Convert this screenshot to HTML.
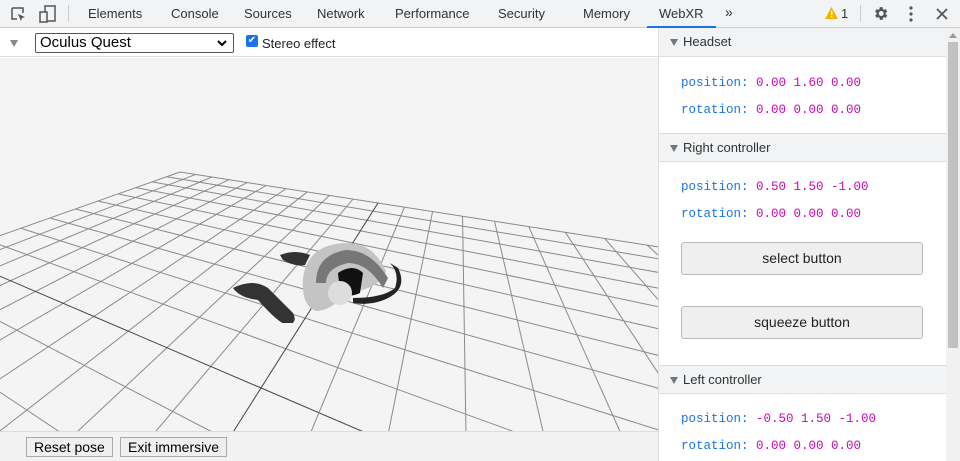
<!DOCTYPE html><html><head><style>
*{box-sizing:border-box;margin:0;padding:0}
body{width:960px;height:461px;overflow:hidden;font-family:"Liberation Sans",sans-serif;background:#fff;position:relative}
.top{position:absolute;left:0;top:0;width:960px;height:28px;background:#f1f3f4;border-bottom:1px solid #cbcdd1}
.tab{position:absolute;top:6px;font-size:13px;color:#333}
.bar2{position:absolute;left:0;top:28px;width:658px;height:29px;background:#fff;border-bottom:1px solid #ddd}
.view{position:absolute;left:0;top:58px;width:658px;height:373px;background:#f4f4f4;overflow:hidden}
.bot{position:absolute;left:0;top:431px;width:658px;height:30px;background:#f2f2f2;border-top:1px solid #ddd}
.btn{position:absolute;top:5px;height:20px;border:1px solid #aaa;background:#efefef;font-size:14px;padding:0 7px;line-height:18px}
.rp{position:absolute;left:658px;top:28px;width:288px;height:433px;border-left:1px solid #ddd;background:#fff;overflow:hidden}
.sh{height:29px;background:#f1f3f4;border-bottom:1px solid #ddd;border-top:1px solid #ddd;font-size:13px;color:#333;line-height:28px;padding-left:24px;position:relative}
.sh:before{content:"";position:absolute;left:11px;top:11px;border-left:4px solid transparent;border-right:4px solid transparent;border-top:7px solid #777}
.kv{font-family:"Liberation Mono",monospace;font-size:12.5px;padding-left:22px;height:27px;line-height:27px}
.k{color:#1a73e8}.v{color:#c80ab0}
.rb{margin:0 23px 0 22px;height:33px;border:1px solid #bbb;border-radius:3px;background:#efefef;font-size:14px;text-align:center;line-height:31px;color:#222}
.sb{position:absolute;left:946px;top:28px;width:14px;height:433px;background:#f1f1f1}
</style></head><body>
<div class="top">
<svg style="position:absolute;left:10px;top:6px" width="16" height="16"><path d="M2 2h11v5M2 2v11h5" fill="none" stroke="#555" stroke-width="1.5"/><path d="M8 8l7 3-3 1-1 3z" fill="#555"/></svg>
<svg style="position:absolute;left:39px;top:5px" width="18" height="18"><rect x="6" y="1" width="10" height="15" fill="none" stroke="#555" stroke-width="1.5"/><rect x="1" y="7" width="7" height="10" fill="#f1f3f4" stroke="#555" stroke-width="1.5"/></svg>
<div style="position:absolute;left:68px;top:5px;width:1px;height:17px;background:#ccc"></div>
<span class="tab" style="left:88px">Elements</span><span class="tab" style="left:171px">Console</span><span class="tab" style="left:244px">Sources</span><span class="tab" style="left:317px">Network</span><span class="tab" style="left:395px">Performance</span><span class="tab" style="left:498px">Security</span><span class="tab" style="left:583px">Memory</span><span class="tab" style="left:659px">WebXR</span>
<div style="position:absolute;left:647px;top:26px;width:69px;height:2px;background:#1a73e8"></div>
<span class="tab" style="left:725px;top:4px;font-size:14px">»</span>
<svg style="position:absolute;left:825px;top:7px" width="13" height="12"><path d="M6.5 0L13 12H0z" fill="#f4b400"/><rect x="6" y="4" width="1.3" height="4" fill="#fff"/><rect x="6" y="9" width="1.3" height="1.3" fill="#fff"/></svg>
<span class="tab" style="left:841px">1</span>
<div style="position:absolute;left:860px;top:5px;width:1px;height:17px;background:#ccc"></div>
<svg style="position:absolute;left:872px;top:5px" width="17" height="17" viewBox="0 0 24 24"><path fill="#555" d="M19.4 13a7 7 0 000-2l2.1-1.6-2-3.5-2.5 1a7 7 0 00-1.7-1L15 3h-4l-.4 2.9a7 7 0 00-1.7 1l-2.5-1-2 3.5L6.6 11a7 7 0 000 2l-2.1 1.6 2 3.5 2.5-1a7 7 0 001.7 1L11 21h4l.4-2.9a7 7 0 001.7-1l2.5 1 2-3.5zM13 15.5a3.5 3.5 0 110-7 3.5 3.5 0 010 7z"/></svg>
<svg style="position:absolute;left:909px;top:6px" width="4" height="16"><circle cx="2" cy="2" r="1.6" fill="#555"/><circle cx="2" cy="8" r="1.6" fill="#555"/><circle cx="2" cy="14" r="1.6" fill="#555"/></svg>
<svg style="position:absolute;left:936px;top:8px" width="12" height="12"><path d="M1 1l10 10M11 1L1 11" stroke="#555" stroke-width="1.8"/></svg>
</div>
<div class="bar2">
<div style="position:absolute;left:10px;top:12px;border-left:4px solid transparent;border-right:4px solid transparent;border-top:7px solid #888"></div>
<div style="position:absolute;left:35px;top:5px;width:199px;height:20px;border:1px solid #555;border-radius:2px;font-size:15px;line-height:18px;padding-left:4px;background:#fff">Oculus Quest<svg style="position:absolute;right:6px;top:6px" width="10" height="7"><path d="M1 1l4 4 4-4" fill="none" stroke="#000" stroke-width="2"/></svg></div>
<div style="position:absolute;left:246px;top:7px;width:12px;height:12px;background:#1a73e8;border-radius:2px;color:#fff;font-size:10px;line-height:12px;text-align:center">✔</div>
<span style="position:absolute;left:262px;top:8px;font-size:13px;color:#222">Stereo effect</span>
</div>
<div class="view">
<svg id="g" style="position:absolute;left:0;top:0" width="658" height="373" viewBox="0 58 658 373"></svg>
<svg style="position:absolute;left:228px;top:185px" width="180" height="80">
<path d="M5 45 q20-10 35 0 l25 25 q5 10-5 12 q-8 0-30-25 q-18-2-25-12z" fill="#333"/>
<path d="M52 12 q15-6 30 0 l-5 10 q-10 2-22-5z" fill="#333"/>
<path d="M75 35 q5-35 45-35 q25 0 38 28 q-5 18-40 22 q-15 18-30 18 q-15-5-13-33z" fill="#c4c4c4"/>
<path d="M88 40 q0-28 30-33 q25 0 42 28 l-5 10 q-15-25-35-25 q-22 5-22 20z" fill="#777"/>
<path d="M110 30 q15-10 25 0 l-3 20 q-10 5-20 0z" fill="#111"/>
<path d="M125 55 q30 0 42-10 q5-15-5-25 l8 5 q10 20-10 30 q-15 8-35 5z" fill="#222"/>
<circle cx="112" cy="50" r="12" fill="#ddd"/>
</svg>
</div>
<script>
(function(){
var a=111.55,b=-208.45,c=180,d=-15.43,e=-33.04,f=172,g=-0.2287,h=-0.4529;
function P(u,v){var w=g*u+h*v+1;return[(a*u+b*v+c)/w,(d*u+e*v+f)/w];}
var s='';
for(var k=0;k<=20;k++){var t=k/10;
 var vm=Math.min(2,(0.97+g*t)/(-h));
 var p=P(t,0),q=P(t,vm);
 var col=k==10?'#444':'#8a8a8a';
 s+='<line x1="'+p[0]+'" y1="'+p[1]+'" x2="'+q[0]+'" y2="'+q[1]+'" stroke="'+col+'" stroke-width="1"/>';
 var um=Math.min(2,(0.97+h*t)/(-g));
 p=P(0,t);q=P(um,t);
 s+='<line x1="'+p[0]+'" y1="'+p[1]+'" x2="'+q[0]+'" y2="'+q[1]+'" stroke="'+col+'" stroke-width="1"/>';
}
document.getElementById('g').innerHTML=s;
})();
</script>
<div class="bot"><div class="btn" style="left:26px">Reset pose</div><div class="btn" style="left:120px">Exit immersive</div></div>
<div class="rp">
<div class="sh" style="border-top:none">Headset</div>
<div style="height:13px"></div>
<div class="kv"><span class="k">position:</span> <span class="v">0.00 1.60 0.00</span></div>
<div class="kv"><span class="k">rotation:</span> <span class="v">0.00 0.00 0.00</span></div>
<div style="height:9px"></div>
<div class="sh">Right controller</div>
<div style="height:12px"></div>
<div class="kv"><span class="k">position:</span> <span class="v">0.50 1.50 -1.00</span></div>
<div class="kv"><span class="k">rotation:</span> <span class="v">0.00 0.00 0.00</span></div>
<div style="height:14px"></div>
<div class="rb">select button</div>
<div style="height:31px"></div>
<div class="rb">squeeze button</div>
<div style="height:26px"></div>
<div class="sh">Left controller</div>
<div style="height:12px"></div>
<div class="kv"><span class="k">position:</span> <span class="v">-0.50 1.50 -1.00</span></div>
<div class="kv"><span class="k">rotation:</span> <span class="v">0.00 0.00 0.00</span></div>
</div>
<div class="sb"><div style="position:absolute;left:3px;top:5px;border-left:4px solid transparent;border-right:4px solid transparent;border-bottom:5px solid #999"></div><div style="position:absolute;left:2px;top:14px;width:10px;height:306px;background:#c1c1c1"></div></div>
</body></html>
